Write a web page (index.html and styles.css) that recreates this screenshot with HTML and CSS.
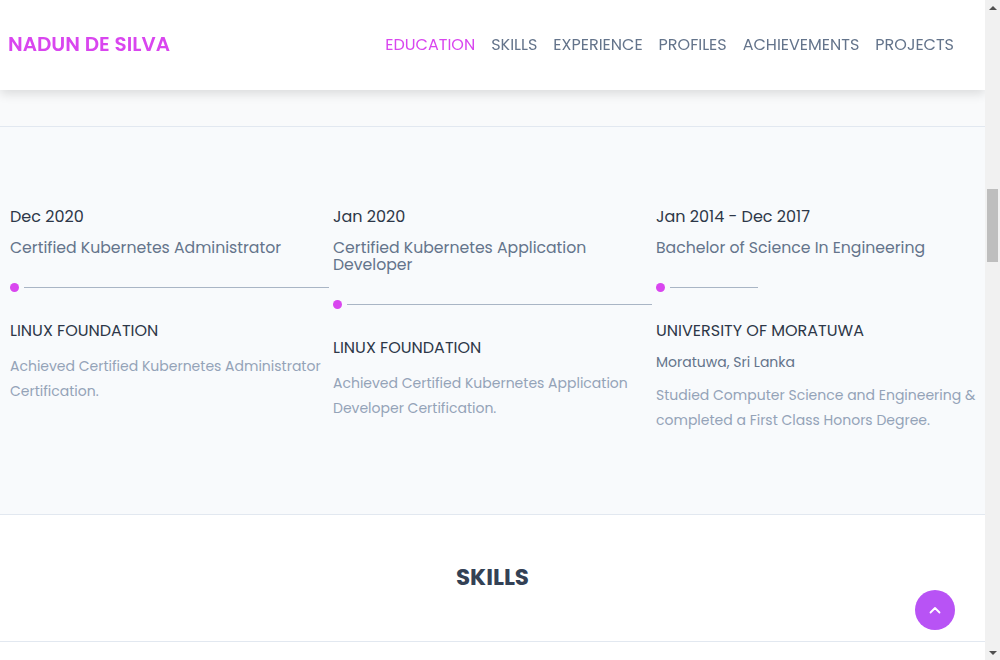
FILE: index.html
```html
<!DOCTYPE html>
<html lang="en">
<head>
<meta charset="utf-8">
<title>Nadun De Silva</title>
<link rel="stylesheet" href="styles.css">
</head>
<body>
<div class="window">
  <div class="viewport">
    <header class="topbar">
      <a class="brand" href="#">NADUN DE SILVA</a>
      <nav class="nav">
        <a class="nav-link active" href="#education">EDUCATION</a>
        <a class="nav-link" href="#skills">SKILLS</a>
        <a class="nav-link" href="#experience">EXPERIENCE</a>
        <a class="nav-link" href="#profiles">PROFILES</a>
        <a class="nav-link" href="#achievements">ACHIEVEMENTS</a>
        <a class="nav-link" href="#projects">PROJECTS</a>
      </nav>
    </header>

    <main class="page">
      <div class="hero-tail"></div>

      <section class="education" id="education">
        <ol class="timeline">
          <li class="tl-item">
            <time class="tl-date">Dec 2020</time>
            <h3 class="tl-title">Certified Kubernetes Administrator</h3>
            <div class="tl-marker"><span class="tl-dot"></span><span class="tl-line"></span></div>
            <h4 class="tl-org">LINUX FOUNDATION</h4>
            <p class="tl-desc">Achieved Certified Kubernetes Administrator Certification.</p>
          </li>
          <li class="tl-item">
            <time class="tl-date">Jan 2020</time>
            <h3 class="tl-title">Certified Kubernetes Application Developer</h3>
            <div class="tl-marker"><span class="tl-dot"></span><span class="tl-line"></span></div>
            <h4 class="tl-org">LINUX FOUNDATION</h4>
            <p class="tl-desc">Achieved Certified Kubernetes Application Developer Certification.</p>
          </li>
          <li class="tl-item">
            <time class="tl-date">Jan 2014 - Dec 2017</time>
            <h3 class="tl-title">Bachelor of Science In Engineering</h3>
            <div class="tl-marker"><span class="tl-dot"></span><span class="tl-line tl-line-short"></span></div>
            <h4 class="tl-org">UNIVERSITY OF MORATUWA</h4>
            <p class="tl-loc">Moratuwa, Sri Lanka</p>
            <p class="tl-desc">Studied Computer Science and Engineering &amp; completed a First Class Honors Degree.</p>
          </li>
        </ol>
      </section>

      <section class="skills" id="skills">
        <h2 class="section-title">SKILLS</h2>
      </section>
      <section class="skills-body"></section>
    </main>
  </div>

  <div class="scrollbar" aria-hidden="true">
    <span class="sb-btn"><span class="sb-arrow-up"></span></span>
    <span class="sb-track"><span class="sb-thumb"></span></span>
    <span class="sb-btn"><span class="sb-arrow-down"></span></span>
  </div>
</div>

<a class="to-top" href="#" aria-label="Back to top">
  <svg width="12" height="8" viewBox="0 0 12 8" aria-hidden="true"><path d="M1.5 6.5 L6 2 L10.5 6.5" fill="none" stroke="#fff" stroke-width="1.8" stroke-linecap="round" stroke-linejoin="round"/></svg>
</a>
</body>
</html>
```

FILE: styles.css
```css
* { box-sizing: border-box; }
html, body { margin: 0; padding: 0; height: 100%; overflow: hidden; }
body {
  font-family: "Poppins", "Open Sans", sans-serif;
  background: #ffffff;
  color: #334155;
}
a { text-decoration: none; }
h2, h3, h4, p, ol { margin: 0; padding: 0; }
ol { list-style: none; }

.window {
  display: flex;
  height: 100vh;
}
.viewport {
  flex: 1;
  min-width: 0;
  overflow: hidden;
}

.scrollbar {
  flex: none;
  width: 15px;
  background: #f1f1f1;
  display: flex;
  flex-direction: column;
}
.sb-btn {
  height: 15px;
  flex: none;
  display: flex;
  align-items: center;
  justify-content: center;
}
.sb-arrow-up {
  width: 0; height: 0;
  border-left: 4px solid transparent;
  border-right: 4px solid transparent;
  border-bottom: 4px solid #505050;
}
.sb-arrow-down {
  width: 0; height: 0;
  border-left: 4px solid transparent;
  border-right: 4px solid transparent;
  border-top: 4px solid #505050;
}
.sb-track {
  flex: 1;
  padding: 0 2px;
}
.sb-thumb {
  display: block;
  margin-top: 174px;
  height: 73px;
  background: #bebebe;
}

.topbar {
  position: sticky;
  top: 0;
  height: 90px;
  background: #ffffff;
  display: flex;
  align-items: center;
  justify-content: space-between;
  padding: 0 31px 2px 8px;
  box-shadow: 0 4px 10px rgba(0, 0, 0, 0.12);
  z-index: 10;
}
.brand {
  color: #d946ef;
  font-size: 20px;
  font-weight: 600;
}
.nav { display: flex; gap: 16px; }
.nav-link {
  color: #64748b;
  font-size: 16px;
}
.nav-link.active { color: #d946ef; }

.hero-tail {
  height: 37px;
  background: #f9fafb;
  border-bottom: 1px solid #e2e8f0;
}

.education {
  background: #f8fafc;
  border-bottom: 1px solid #e2e8f0;
  padding: 78px 6px 82px 10px;
}
.timeline {
  display: grid;
  grid-template-columns: repeat(3, 1fr);
}
.tl-date {
  display: block;
  font-size: 16px;
  line-height: 24px;
  font-weight: 400;
  color: #2d3748;
}
.tl-title {
  margin-top: 10px;
  padding-right: 4px;
  font-size: 15.7px;
  line-height: 17px;
  font-weight: 400;
  color: #64748b;
}
.tl-marker {
  margin-top: 27px;
  padding-right: 4px;
  display: flex;
  align-items: center;
  height: 9px;
}
.tl-dot {
  width: 9px; height: 9px;
  border-radius: 50%;
  background: #d946ef;
  flex: none;
}
.tl-line {
  margin-left: 5px;
  flex: 1;
  height: 1px;
  background: #a9b5c5;
}
.tl-line-short { flex: none; width: 88px; }
.tl-org {
  margin-top: 27px;
  font-size: 16px;
  line-height: 24px;
  font-weight: 400;
  color: #2d3748;
}
.tl-loc {
  margin-top: 9px;
  font-size: 14px;
  line-height: 20px;
  color: #64748b;
}
.tl-desc {
  margin-top: 11px;
  font-size: 14px;
  line-height: 24.5px;
  color: #94a3b8;
}

.skills {
  border-bottom: 1px solid #e2e8f0;
  padding: 46px 0 48px;
  text-align: center;
}
.section-title {
  font-size: 23px;
  line-height: 32px;
  font-weight: 700;
  color: #334155;
}
.skills-body { height: 600px; }

.to-top {
  position: fixed;
  right: 45px;
  bottom: 30px;
  width: 40px; height: 40px;
  border-radius: 50%;
  background: #b853f5;
  display: flex;
  align-items: center;
  justify-content: center;
  z-index: 20;
}
```
